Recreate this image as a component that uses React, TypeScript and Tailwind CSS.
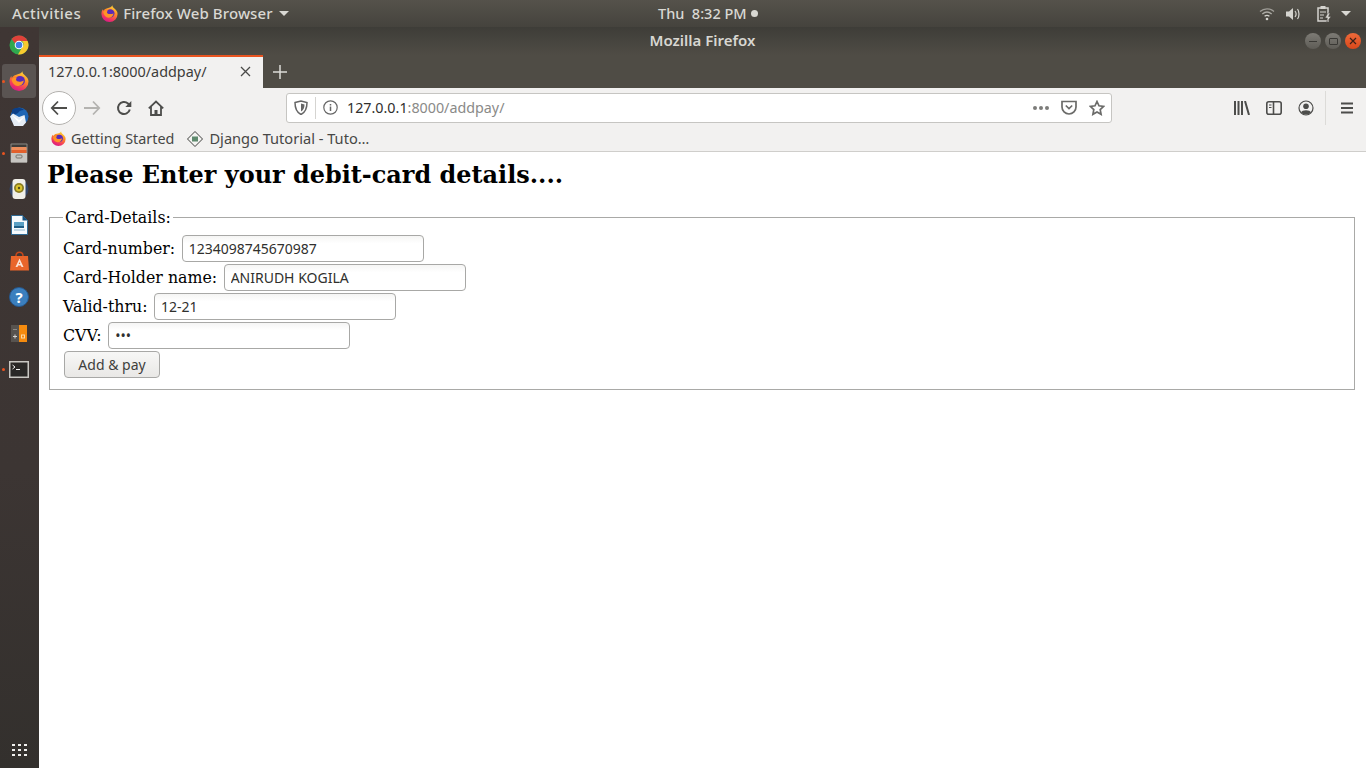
import { useId } from "react";

const ubuntu = "font-['Noto_Sans','Open_Sans',sans-serif]";

function FirefoxLogo({ size = 20 }: { size?: number }) {
  const id = useId();
  return (
    <svg width={size} height={size} viewBox="0 0 20 20">
      <defs>
        <linearGradient id={id} x1="0.75" y1="0" x2="0.3" y2="1">
          <stop offset="0" stopColor="#ffdd3c" />
          <stop offset="0.4" stopColor="#ff8a26" />
          <stop offset="0.75" stopColor="#f2395f" />
          <stop offset="1" stopColor="#d6178a" />
        </linearGradient>
      </defs>
      <path
        d="M13.500.3c-.2 1.700.8 2.700 2.300 3.900 2.200 1.800 3.700 3.700 3.700 6.300a9.500 9.500 0 0 1-19 0C.5 8.300 1.100 6.300 2.300 4.900l.5 2c.9-1.500 2.300-2.700 4.500-3.200C10 3 12.800 2.400 13.500.3z"
        fill={`url(#${id})`}
      />
      <circle cx="11" cy="9.800" r="4.900" fill="#5a2bb8" />
      <path d="M2.600 8.200C4 6.600 6.200 6 8 6.800c-.6.400-1 1-1 1.700 0 1.700 2.400 2.400 4.400 2.200 1.100-.1 2.300-.5 3.300-1.100-.1 3.200-2.700 5.600-5.900 5.300-3.200-.2-5.600-2.700-6.200-6.700z" fill="#ff9326" />
    </svg>
  );
}

function ChromeLogo() {
  return (
    <svg width="20" height="20" viewBox="0 0 20 20">
      <circle cx="10" cy="10" r="9.500" fill="#2fa84f" />
      <path d="M10 .5a9.500 9.500 0 0 1 8.600 5.500H10a4 4 0 0 0-3.800 2.700L2.600 4A9.500 9.500 0 0 1 10 .5z" fill="#e0413a" />
      <path d="M18.600 6A9.500 9.500 0 0 1 9 19.450L13 12.500a4 4 0 0 0-.2-6.500z" fill="#f8c92f" />
      <circle cx="10" cy="10" r="4.300" fill="#fff" />
      <circle cx="10" cy="10" r="3.300" fill="#3f7fe6" />
    </svg>
  );
}

function ThunderbirdLogo() {
  return (
    <svg width="20" height="20" viewBox="0 0 20 20">
      <circle cx="10.500" cy="9.500" r="9" fill="#1f66b5" />
      <path d="M3 3c3-3 9-3 12 0-3 0-5 1-6 3L3 9z" fill="#0b3f87" />
      <path d="M1 9.500l3-3 6 3.500 5.500-2 1.500 7.500-3 3.500H5z" fill="#e6edf5" />
      <path d="M3 8l7 5 6-4-6 7z" fill="#fff" />
    </svg>
  );
}

function FilesIcon() {
  return (
    <svg width="18" height="20" viewBox="0 0 18 20">
      <rect x="0.500" y="0.500" width="17" height="19" rx="1" fill="#8c8a85" />
      <rect x="1.500" y="1.500" width="15" height="3" fill="#3f3c39" />
      <rect x="1.500" y="4" width="15" height="3" fill="#ef8e5c" />
      <rect x="1.500" y="7" width="15" height="3" fill="#e2602c" />
      <rect x="1" y="10" width="16" height="9.500" fill="#c7c5c1" />
      <rect x="6" y="12" width="6" height="3" rx="1" fill="none" stroke="#77746f" />
    </svg>
  );
}

function RhythmboxIcon() {
  return (
    <svg width="20" height="22" viewBox="0 0 20 22">
      <circle cx="10" cy="11" r="9.500" fill="#34466a" />
      <rect x="3.500" y="1" width="13" height="20" rx="3" fill="#f0efe9" />
      <circle cx="10" cy="10" r="5" fill="#8a7d22" />
      <circle cx="10" cy="10" r="3.200" fill="#d9c22e" />
      <circle cx="10" cy="10" r="1.200" fill="#56501a" />
    </svg>
  );
}

function WriterIcon() {
  return (
    <svg width="17" height="20" viewBox="0 0 17 20">
      <path d="M.5.5h11l5 5v14H.5z" fill="#f6fafd" stroke="#2f6a94" />
      <path d="M11.500.5l5 5h-5z" fill="#17507c" />
      <rect x="3" y="7" width="10" height="6" fill="#5aa0c4" />
      <rect x="3" y="11" width="10" height="2" fill="#1f5e86" />
      <rect x="3" y="14.500" width="11" height="1" fill="#8fb7cf" />
    </svg>
  );
}

function SoftwareIcon() {
  return (
    <svg width="19" height="20" viewBox="0 0 19 20">
      <path d="M6 5c0-5 7-5 7 0" fill="none" stroke="#c4481c" strokeWidth="1.500" />
      <path d="M1 5h17l1 14.500H0z" fill="#e9652b" />
      <path d="M9.500 7.500L13.500 16h-2l-.6-1.500H8.100L7.500 16h-2zM8.700 13h1.600l-.8-2z" fill="#fbe3d6" />
    </svg>
  );
}

function HelpIcon() {
  return (
    <div className="flex h-[20px] w-[20px] items-center justify-center rounded-full border border-[#25588f] bg-[#3b7fbe] font-['Noto_Sans',sans-serif] text-[15px] font-bold leading-none text-white">
      ?
    </div>
  );
}

function CalcIcon() {
  return (
    <svg width="16" height="17" viewBox="0 0 16 17">
      <rect width="8" height="17" fill="#57534f" />
      <rect x="8" width="8" height="17" fill="#f58b0e" />
      <rect x="2" y="4" width="4" height="1" fill="#8d8a86" />
      <path d="M2 11h4v1H2zM3.500 9.500h1v4h-1z" fill="#d6d4d1" />
      <rect x="10.500" y="10" width="3" height="3" fill="none" stroke="#fbd9a8" />
    </svg>
  );
}

function TerminalIcon() {
  return (
    <svg width="20" height="17" viewBox="0 0 20 17">
      <rect x="0.750" y="0.750" width="18.500" height="15.500" fill="#2a2827" stroke="#c9c7c3" strokeWidth="1.500" />
      <path d="M3.500 4l2.500 2-2.500 2" fill="none" stroke="#f2f2f2" />
      <rect x="7" y="8" width="4" height="1" fill="#f2f2f2" />
    </svg>
  );
}

function DockItem({ running, active, children }: { running?: boolean; active?: boolean; children: React.ReactNode }) {
  return (
    <div className="relative flex h-[34px] w-[39px] items-center justify-center pr-[1px]">
      {running && <span className="absolute left-[2px] top-[16px] h-[3px] w-[3px] rounded-full bg-[#e95420]" />}
      {active ? (
        <div className="flex h-[34px] w-[34px] items-center justify-center rounded-[3px] bg-[#5a5452]">{children}</div>
      ) : (
        children
      )}
    </div>
  );
}

function Dock() {
  return (
    <aside className="flex w-[39px] shrink-0 flex-col items-center bg-[linear-gradient(180deg,#3f3634_0%,#3c3533_60%,#33302d_100%)] pb-[12px] pt-[1px]">
      <div className="flex flex-col gap-[2px]">
        <DockItem><ChromeLogo /></DockItem>
        <DockItem running active><FirefoxLogo /></DockItem>
        <DockItem><ThunderbirdLogo /></DockItem>
        <DockItem running><FilesIcon /></DockItem>
        <DockItem><RhythmboxIcon /></DockItem>
        <DockItem><WriterIcon /></DockItem>
        <DockItem><SoftwareIcon /></DockItem>
        <DockItem><HelpIcon /></DockItem>
        <DockItem><CalcIcon /></DockItem>
        <DockItem running><TerminalIcon /></DockItem>
      </div>
      <div className="mt-auto grid grid-cols-3 gap-[3px]">
        {Array.from({ length: 9 }).map((_, i) => (
          <span key={i} className="h-[2px] w-[3px] bg-[#f0f0ee]" />
        ))}
      </div>
    </aside>
  );
}

function TopBar() {
  return (
    <header className={`relative flex h-[27px] shrink-0 items-center bg-[linear-gradient(180deg,#55524b,#45433d)] pl-[12px] pr-[15px] text-[15px] font-medium text-[#d9d8d3] ${ubuntu}`}>
      <span className="tracking-[0.45px]">Activities</span>
      <div className="ml-[20px] flex items-center gap-[5px]">
        <FirefoxLogo size={17} />
        <span className="tracking-[0.1px]">Firefox Web Browser</span>
        <span className="ml-[1px] h-0 w-0 border-x-[5px] border-t-[5px] border-x-transparent border-t-[#d9d8d3]" />
      </div>
      <div className="absolute left-[658px] top-0 flex h-[27px] items-center gap-[4px] text-[14.500px]">
        <span className="whitespace-pre">Thu  8:32 PM</span>
        <span className="h-[7px] w-[7px] rounded-full bg-[#d9d8d3]" />
      </div>
      <div className="ml-auto flex items-center">
        <svg width="16" height="14" viewBox="0 0 16 14" fill="none" stroke="#d5d4cf" strokeWidth="1.300">
          <path d="M1 4.500c4-3.600 10-3.600 14 0" opacity="0.6" />
          <path d="M3.300 7c2.800-2.400 6.600-2.400 9.400 0" opacity="0.7" />
          <path d="M5.600 9.300c1.500-1.200 3.300-1.200 4.800 0" />
          <circle cx="8" cy="12" r="1.300" fill="#d5d4cf" stroke="none" />
        </svg>
        <svg className="ml-[10px]" width="16" height="14" viewBox="0 0 16 14" fill="none">
          <path d="M1 4.500h3L8 1v12L4 9.500H1z" fill="#d5d4cf" />
          <path d="M10 4c1.200 1.600 1.200 4.400 0 6M12.500 2c2 2.800 2 7.200 0 10" stroke="#d5d4cf" strokeWidth="1.200" />
        </svg>
        <svg className="ml-[16px]" width="15" height="18" viewBox="0 0 15 18" fill="none">
          <path d="M1 3h10v13H1z" stroke="#d5d4cf" strokeWidth="1.500" />
          <rect x="3.500" y="1" width="5" height="3" fill="#d5d4cf" />
          <path d="M3 7h6M3 10h4M3 13h3" stroke="#d5d4cf" />
          <path d="M11 8l-3 5h2.500L9.500 17.500 14 11.500h-2.500L13 8z" fill="#d5d4cf" stroke="#4e4b45" strokeWidth="0.500" />
        </svg>
        <span className="ml-[9px] h-0 w-0 border-x-[5px] border-t-[5px] border-x-transparent border-t-[#d9d8d3]" />
      </div>
    </header>
  );
}

function WindowButton({ kind }: { kind: "min" | "max" | "close" }) {
  const bg = kind === "close" ? "bg-[linear-gradient(180deg,#ee6a3a,#d9481b)]" : "bg-[linear-gradient(180deg,#7d7b75,#5e5c56)]";
  return (
    <div className={`flex h-[16px] w-[16px] items-center justify-center rounded-full ${bg}`}>
      {kind === "min" && <span className="h-[1px] w-[8px] bg-[#3a3935]" />}
      {kind === "max" && <span className="h-[7px] w-[9px] rounded-[1px] border border-[#3a3935]" />}
      {kind === "close" && (
        <svg width="8" height="8" viewBox="0 0 8 8" stroke="#3b2018" strokeWidth="1.200">
          <path d="M1 1l6 6M7 1L1 7" />
        </svg>
      )}
    </div>
  );
}

function TitleBar() {
  return (
    <div className={`relative flex h-[28px] shrink-0 items-center justify-center bg-[linear-gradient(180deg,#3e3d38,#4f4c45)] pb-[2px] text-[15px] font-semibold text-[#d8d7d2] ${ubuntu}`}>
      <span>Mozilla Firefox</span>
      <div className="absolute right-[5px] top-[6px] flex gap-[4px]">
        <WindowButton kind="min" />
        <WindowButton kind="max" />
        <WindowButton kind="close" />
      </div>
    </div>
  );
}

function TabStrip() {
  return (
    <div className={`flex h-[33px] shrink-0 items-stretch bg-[#4f4c45] ${ubuntu}`}>
      <div className="flex w-[224px] items-center border-t-2 border-[#e95420] bg-[#f2f1f0] pb-[2px] pl-[9px] pr-[12px] text-[14.400px] text-[#3d3c3a]">
        <span>127.0.0.1:8000/addpay/</span>
        <svg className="ml-auto" width="11" height="11" viewBox="0 0 11 11" stroke="#4a4a48" strokeWidth="1.300">
          <path d="M1 1l9 9M10 1l-9 9" />
        </svg>
      </div>
      <div className="flex w-[33px] items-center justify-center">
        <svg width="14" height="14" viewBox="0 0 14 14" stroke="#dddcd8" strokeWidth="1.500">
          <path d="M7 0v14M0 7h14" />
        </svg>
      </div>
    </div>
  );
}

function NavToolbar() {
  return (
    <div className={`flex h-[39px] shrink-0 items-center bg-[#f2f1f0] pl-[3px] ${ubuntu}`}>
      <div className="flex h-[34px] w-[34px] items-center justify-center rounded-full border border-[#b3b1ae] bg-white">
        <svg width="18" height="16" viewBox="0 0 18 16" fill="none" stroke="#4d4d4b" strokeWidth="1.800">
          <path d="M17 8H2M8 1.500L1.800 8 8 14.500" />
        </svg>
      </div>
      <svg className="ml-[7px]" width="18" height="16" viewBox="0 0 18 16" fill="none" stroke="#b4b3b0" strokeWidth="1.800">
        <path d="M1 8h15M10 1.500L16.200 8 10 14.500" />
      </svg>
      <svg className="ml-[15px]" width="16" height="16" viewBox="0 0 16 16" fill="none" stroke="#4d4d4b" strokeWidth="2">
        <path d="M13.800 9.500A6 6 0 1 1 12 3.500l2 2" />
        <path d="M15.300 1v6H9.300" fill="#4d4d4b" stroke="none" />
      </svg>
      <svg className="ml-[16px]" width="16" height="16" viewBox="0 0 16 16" fill="none" stroke="#4d4d4b" strokeWidth="1.800">
        <path d="M.8 8.300L8 1.500l7.200 6.800M3 6.500V15h10V6.500" />
        <rect x="6.500" y="10" width="3" height="5" fill="#4d4d4b" stroke="none" />
      </svg>
      <div className="ml-[122px] flex h-[30px] w-[826px] items-center rounded-[3px] border border-[#c6c5c2] bg-white pl-[7px] pr-[6px] text-[14.300px]">
        <svg width="14" height="15" viewBox="0 0 14 15" fill="none">
          <path d="M1 2.500L7 1l6 1.500c0 5-1 9.500-6 12-5-2.500-6-7-6-12z" stroke="#666" strokeWidth="1.500" />
          <path d="M7 3.500l3.500 1c0 3-.8 5.500-3.500 7z" fill="#666" />
        </svg>
        <span className="ml-[7px] h-[22px] w-[1px] bg-[#d5d4d1]" />
        <svg className="ml-[7px]" width="15" height="15" viewBox="0 0 15 15" fill="none" stroke="#666">
          <circle cx="7.500" cy="7.500" r="6.700" strokeWidth="1.200" />
          <path d="M7.500 6.500V11M7.500 4v1.500" strokeWidth="1.500" />
        </svg>
        <span className="ml-[9px] mt-[1px] text-[#2f2f2d]">127.0.0.1<span className="text-[#8a8a88]">:8000/addpay/</span></span>
        <div className="ml-auto flex items-center">
          <span className="flex gap-[2px]">
            <i className="h-[4px] w-[4px] rounded-full bg-[#7c7c7a]" />
            <i className="h-[4px] w-[4px] rounded-full bg-[#7c7c7a]" />
            <i className="h-[4px] w-[4px] rounded-full bg-[#7c7c7a]" />
          </span>
          <svg className="ml-[12px]" width="16" height="15" viewBox="0 0 16 15" fill="none" stroke="#6b6b69" strokeWidth="1.700">
            <path d="M1 1.500h14v5.500a7 7 0 0 1-14 0z" />
            <path d="M4.800 5.500L8 8.500l3.200-3" />
          </svg>
          <svg className="ml-[12px]" width="16" height="16" viewBox="0 0 16 16" fill="none" stroke="#6b6b69" strokeWidth="1.700">
            <path d="M8 1.500l2 4.300 4.700.6-3.500 3.200.9 4.700L8 12l-4.100 2.300.9-4.700L1.300 6.400 6 5.800z" />
          </svg>
        </div>
      </div>
      <div className="ml-[122px] flex items-center">
        <svg width="16" height="14" viewBox="0 0 16 14" fill="none" stroke="#4d4d4b" strokeWidth="2">
          <path d="M1 0v14M4.500 0v14M8 0v14M11 0l4 14" />
        </svg>
        <svg className="ml-[16px]" width="16" height="14" viewBox="0 0 16 14" fill="none" stroke="#4d4d4b" strokeWidth="1.600">
          <rect x="0.800" y="0.800" width="14.400" height="12.400" rx="2" />
          <path d="M7.500 1v12" />
          <path d="M3 4h2.500M3 6.500h2.500" strokeWidth="1.200" />
        </svg>
        <svg className="ml-[16px]" width="16" height="16" viewBox="0 0 16 16" fill="none" stroke="#4d4d4b" strokeWidth="1.200">
          <circle cx="8" cy="8" r="7" />
          <circle cx="8" cy="6.300" r="2.800" fill="#4d4d4b" stroke="none" />
          <path d="M3 12.500c1-3 9-3 10 0-2.500 2.500-7.500 2.500-10 0z" fill="#4d4d4b" stroke="none" />
        </svg>
        <span className="ml-[11px] h-[34px] w-[1px] bg-[#dcdbd8]" />
        <svg className="ml-[15px]" width="12" height="12" viewBox="0 0 12 12" stroke="#4d4d4b" strokeWidth="1.800">
          <path d="M0 1.500h12M0 6h12M0 10.500h12" />
        </svg>
      </div>
    </div>
  );
}

function BookmarksBar() {
  return (
    <div className={`flex h-[25px] shrink-0 items-center border-b border-[#cfcecb] bg-[#f2f1f0] pb-[1px] pl-[12px] text-[14.400px] text-[#474745] ${ubuntu}`}>
      <FirefoxLogo size={15} />
      <span className="ml-[5px]">Getting Started</span>
      <svg className="ml-[13px]" width="16" height="16" viewBox="0 0 16 16">
        <path d="M8 .5L15.500 8 8 15.500.5 8z" fill="#f4f4f2" stroke="#3f3f3d" />
        <rect x="5" y="5.500" width="6" height="5" fill="#5f8a6e" />
      </svg>
      <span className="ml-[6px] text-[14.600px]">Django Tutorial - Tuto…</span>
    </div>
  );
}

function Field({ label, value, type = "text" }: { label: string; value: string; type?: string }) {
  return (
    <div className="flex h-[29px] items-center">
      <label className="mr-[6.500px]">{label}</label>
      <input
        readOnly
        type={type}
        value={value}
        className={`h-[27px] w-[242px] rounded-[4px] border border-[#a8a8a6] bg-[linear-gradient(180deg,#f5f5f4,#ffffff_30%)] px-[6px] text-[14px] text-[#30302e] outline-none ${ubuntu}`}
      />
    </div>
  );
}

function CardPage() {
  return (
    <main className="flex-1 bg-white pl-[8px] pr-[8px] font-['DejaVu_Serif',serif] text-[15.800px] text-black">
      <h1 className="mt-[7px] text-[23.950px] font-bold leading-[32px]">Please Enter your debit-card details....</h1>
      <fieldset className="ml-[2px] mr-[3px] mt-[17px] h-[182px] border border-[#a9a9a7] pl-[13px] pr-[12px]">
        <legend className="px-[2px] pt-[1px] leading-[18px]">Card-Details:</legend>
        <div className="mt-[7px] flex flex-col">
          <Field label="Card-number:" value="1234098745670987" />
          <Field label="Card-Holder name:" value="ANIRUDH KOGILA" />
          <Field label="Valid-thru:" value="12-21" />
          <Field label="CVV:" value="•••" />
          <button className={`ml-[1px] mt-[1px] h-[27px] w-[96px] rounded-[4px] border border-[#a8a8a6] bg-[linear-gradient(180deg,#f7f7f6,#e9e8e6)] text-[14px] text-[#3f3f3d] ${ubuntu}`}>
            Add &amp; pay
          </button>
        </div>
      </fieldset>
    </main>
  );
}

export default function App() {
  return (
    <div className="flex h-screen w-full flex-col overflow-hidden">
      <TopBar />
      <div className="flex min-h-0 flex-1">
        <Dock />
        <div className="flex min-w-0 flex-1 flex-col">
          <TitleBar />
          <TabStrip />
          <NavToolbar />
          <BookmarksBar />
          <CardPage />
        </div>
      </div>
    </div>
  );
}
